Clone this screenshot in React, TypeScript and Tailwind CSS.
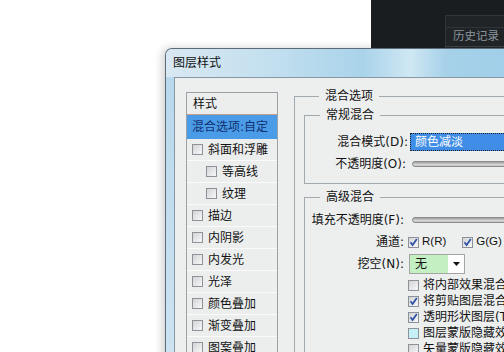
import React from 'react';

const Check = ({ checked, hl }: { checked?: boolean; hl?: boolean }) => (
  <span
    className={`relative inline-block shrink-0 w-[11px] h-[11px] border border-[#8d9298] ${
      hl ? 'bg-[#c4f1f8]' : 'bg-[linear-gradient(135deg,#d2d4d6,#f8f8f8)]'
    }`}
  >
    {checked && (
      <svg className="absolute left-0 top-0" width="9" height="9" viewBox="0 0 9 9">
        <path d="M1.5 4.2 L3.6 7 L7.8 1" fill="none" stroke="#2b4fa3" strokeWidth="1.7" />
      </svg>
    )}
  </span>
);

const Slider = () => (
  <div className="w-[120px] h-[6px] rounded-full border border-[#8c8c8c] bg-[linear-gradient(180deg,#9c9c9c,#d6d6d6_60%,#c4c4c4)]" />
);

const styles: { label: string; sub?: boolean }[] = [
  { label: '斜面和浮雕' },
  { label: '等高线', sub: true },
  { label: '纹理', sub: true },
  { label: '描边' },
  { label: '内阴影' },
  { label: '内发光' },
  { label: '光泽' },
  { label: '颜色叠加' },
  { label: '渐变叠加' },
  { label: '图案叠加' },
];

const options: { label: string; checked?: boolean; hl?: boolean }[] = [
  { label: '将内部效果混合成组(I)' },
  { label: '将剪贴图层混合成组(P)', checked: true },
  { label: '透明形状图层(T)', checked: true },
  { label: '图层蒙版隐藏效果(S)', hl: true },
  { label: '矢量蒙版隐藏效果(H)' },
];

export default function App() {
  return (
    <div className="w-[504px] h-[352px] overflow-hidden bg-white font-['DejaVu_Sans','Noto_Sans_CJK_SC',sans-serif] text-[12px] text-[#111]">
      {/* app behind the dialog */}
      <div className="h-[48px] flex">
        <div className="ml-auto w-[133px] h-full bg-[#1a1d20] flex justify-end">
          <div className="w-[59px] mt-[15px] border-l border-t border-[#30353a] bg-[#202427] flex flex-col">
            <div className="h-[12px] border-b border-[#2e3337]" />
            <div className="h-[18px] pl-[7px] flex items-center text-[11.5px] text-[#8b949e] whitespace-nowrap">历史记录</div>
            <div className="flex-1 border-t border-[#3a3f44]" />
          </div>
        </div>
      </div>

      {/* dialog */}
      <div className="ml-[165px] w-[360px] rounded-tl-[7px] border-l border-t border-[#5d6b78] shadow-[-3px_0_8px_rgba(0,0,0,0.18)] bg-[#c4def0] flex flex-col">
        <div className="h-[28px] shrink-0 rounded-tl-[6px] pl-[7px] flex items-center bg-[linear-gradient(90deg,#d9e8f2,#c2dfef_30%,#a9d3ea_55%,#cfe7f3_68%,#a6d1e9_78%,#9fcde8)]">
          <span>图层样式</span>
        </div>
        <div className="flex">
          <div className="w-[8px] shrink-0 bg-[linear-gradient(180deg,#b9d8ec,#cfe4f2)]" />
          <div className="flex-1 border-l border-t border-[#8697a6] bg-[#edefef] pt-[10px] pl-[11px] flex items-start">
            {/* style list */}
            <div className="mt-[4px] w-[92px] shrink-0 border border-[#9aa1a7] bg-[#eceeee]">
              <div className="h-[22px] pl-[6px] flex items-center border-b border-[#c99c88]">样式</div>
              <div className="h-[24px] pl-[5px] flex items-center bg-[#4a9ce9] text-[#10306e] whitespace-nowrap">混合选项:自定</div>
              {styles.map((s) => (
                <div
                  key={s.label}
                  className={`h-[22px] flex items-center gap-[5px] border-b border-[#fbfbfb] whitespace-nowrap ${
                    s.sub ? 'pl-[19px]' : 'pl-[5px]'
                  }`}
                >
                  <Check />
                  <span>{s.label}</span>
                </div>
              ))}
            </div>

            {/* blend options */}
            <fieldset className="mt-[1px] ml-[16px] w-[250px] shrink-0 h-[300px] border-l border-t border-[#a0a9ae] pl-[9px]">
              <legend className="ml-[15px] px-[6px] leading-[14px]">混合选项</legend>

              <fieldset className="mt-[5px] w-[230px] border border-[#a0a9ae] pb-[11px]">
                <legend className="ml-[15px] px-[6px] leading-[14px]">常规混合</legend>
                <div className="mt-[11px] h-[18px] flex items-center">
                  <span className="w-[103px] text-right whitespace-nowrap">混合模式(D):</span>
                  <div className="ml-[2px] w-[130px] h-[18px] border border-dotted border-[#222] bg-[#3f8de6] text-white pl-[4px] flex items-center">
                    颜色减淡
                  </div>
                </div>
                <div className="mt-[5px] h-[16px] flex items-center">
                  <span className="w-[103px] text-right whitespace-nowrap pr-[2px]">不透明度(O):</span>
                  <div className="ml-[4px]">
                    <Slider />
                  </div>
                </div>
              </fieldset>

              <fieldset className="mt-[6px] w-[230px] h-[200px] border border-[#a0a9ae]">
                <legend className="ml-[15px] px-[6px] leading-[14px]">高级混合</legend>
                <div className="mt-[8px] h-[16px] flex items-center">
                  <span className="w-[99px] text-right whitespace-nowrap">填充不透明度(F):</span>
                  <div className="ml-[8px]">
                    <Slider />
                  </div>
                </div>
                <div className="mt-[6px] h-[16px] flex items-center">
                  <span className="w-[99px] text-right">通道:</span>
                  <div className="ml-[4px] flex items-center gap-[3px] font-['Liberation_Sans',sans-serif] text-[11.5px]">
                    <Check checked />
                    <span>R(R)</span>
                  </div>
                  <div className="ml-[16px] flex items-center gap-[3px] font-['Liberation_Sans',sans-serif] text-[11.5px]">
                    <Check checked />
                    <span>G(G)</span>
                  </div>
                </div>
                <div className="mt-[4px] h-[20px] flex items-center">
                  <span className="w-[99px] text-right whitespace-nowrap">挖空(N):</span>
                  <div className="ml-[5px] h-[20px] w-[56px] border border-[#a4a4a4] bg-white flex">
                    <div className="w-[38px] bg-[#c3efc2] pl-[5px] flex items-center">无</div>
                    <div className="flex-1 flex items-center justify-center">
                      <svg width="7" height="4" viewBox="0 0 7 4">
                        <polygon points="0,0 7,0 3.5,4" fill="#111" />
                      </svg>
                    </div>
                  </div>
                </div>
                <div className="mt-[3px] pl-[103px] flex flex-col">
                  {options.map((o) => (
                    <div key={o.label} className="h-[16px] flex items-center gap-[4px] whitespace-nowrap">
                      <Check checked={o.checked} hl={o.hl} />
                      <span>{o.label}</span>
                    </div>
                  ))}
                </div>
              </fieldset>
            </fieldset>
          </div>
        </div>
      </div>
    </div>
  );
}
